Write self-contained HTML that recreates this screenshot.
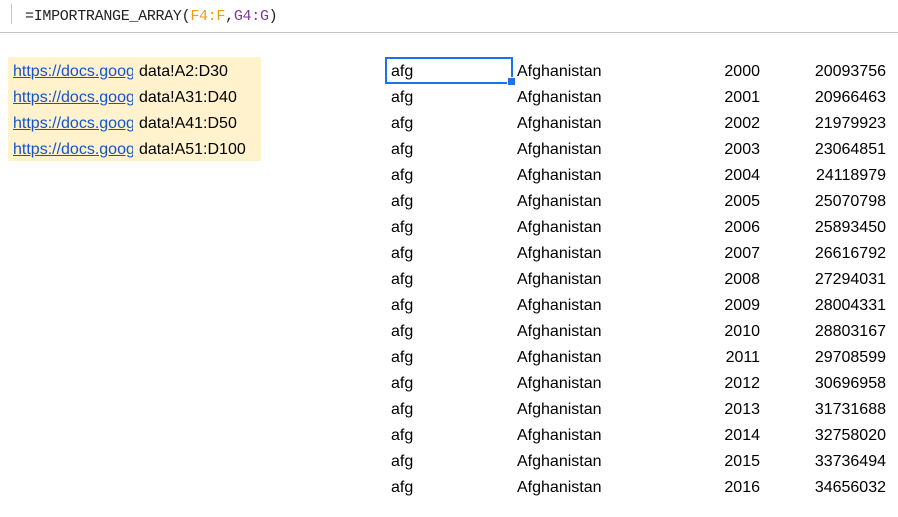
<!DOCTYPE html>
<html><head><style>
body{margin:0;width:898px;height:517px;background:#fff;font-family:"Liberation Sans",Arial,sans-serif;font-size:16px;color:#000;position:relative;overflow:hidden}
.fb{position:absolute;left:0;top:0;width:898px;height:32px;border-bottom:1px solid #c7c7c7}
.fb .bar{position:absolute;left:11px;top:4px;width:1px;height:20px;background:#c7c7c7}
.fb .t{position:absolute;left:25px;top:8px;font-family:"Liberation Mono",monospace;font-size:15px;color:#222;letter-spacing:-0.3px}
.y{position:absolute;left:8px;top:57px;width:253px;height:104px;background:#fff2cc}
.r{position:absolute;height:26px;line-height:26px;white-space:nowrap}
a{color:#1155cc;text-decoration:underline}
.sel{position:absolute;left:385px;top:57px;width:124px;height:23px;border:2px solid #1a73e8}
.h{position:absolute;left:507px;top:77px;width:7px;height:7px;background:#1a73e8;border:1px solid #fff}
</style></head><body>
<div class="fb"><div class="bar"></div><div class="t">=IMPORTRANGE_ARRAY(<span style="color:#f7981d">F4:F</span>,<span style="color:#7e3794">G4:G</span>)</div></div>
<div class="y"></div>
<div id="c"></div>
<div class="sel"></div><div class="h"></div>
<script>
var c=document.getElementById('c'),h='';
var d=['A2:D30','A31:D40','A41:D50','A51:D100'];
for(var i=0;i<4;i++){var t=59+i*26;
h+='<div class="r" style="left:13px;top:'+t+'px;width:120px;overflow:hidden"><a>https://docs.google.com</a></div>';
h+='<div class="r" style="left:139px;top:'+t+'px">data!'+d[i]+'</div>';}
var p=[20093756,20966463,21979923,23064851,24118979,25070798,25893450,26616792,27294031,28004331,28803167,29708599,30696958,31731688,32758020,33736494,34656032];
for(var i=0;i<17;i++){var t=59+i*26;
h+='<div class="r" style="left:391px;top:'+t+'px">afg</div>';
h+='<div class="r" style="left:517px;top:'+t+'px">Afghanistan</div>';
h+='<div class="r" style="right:138px;top:'+t+'px">'+(2000+i)+'</div>';
h+='<div class="r" style="right:12px;top:'+t+'px">'+p[i]+'</div>';}
c.innerHTML=h;
</script>
</body></html>
